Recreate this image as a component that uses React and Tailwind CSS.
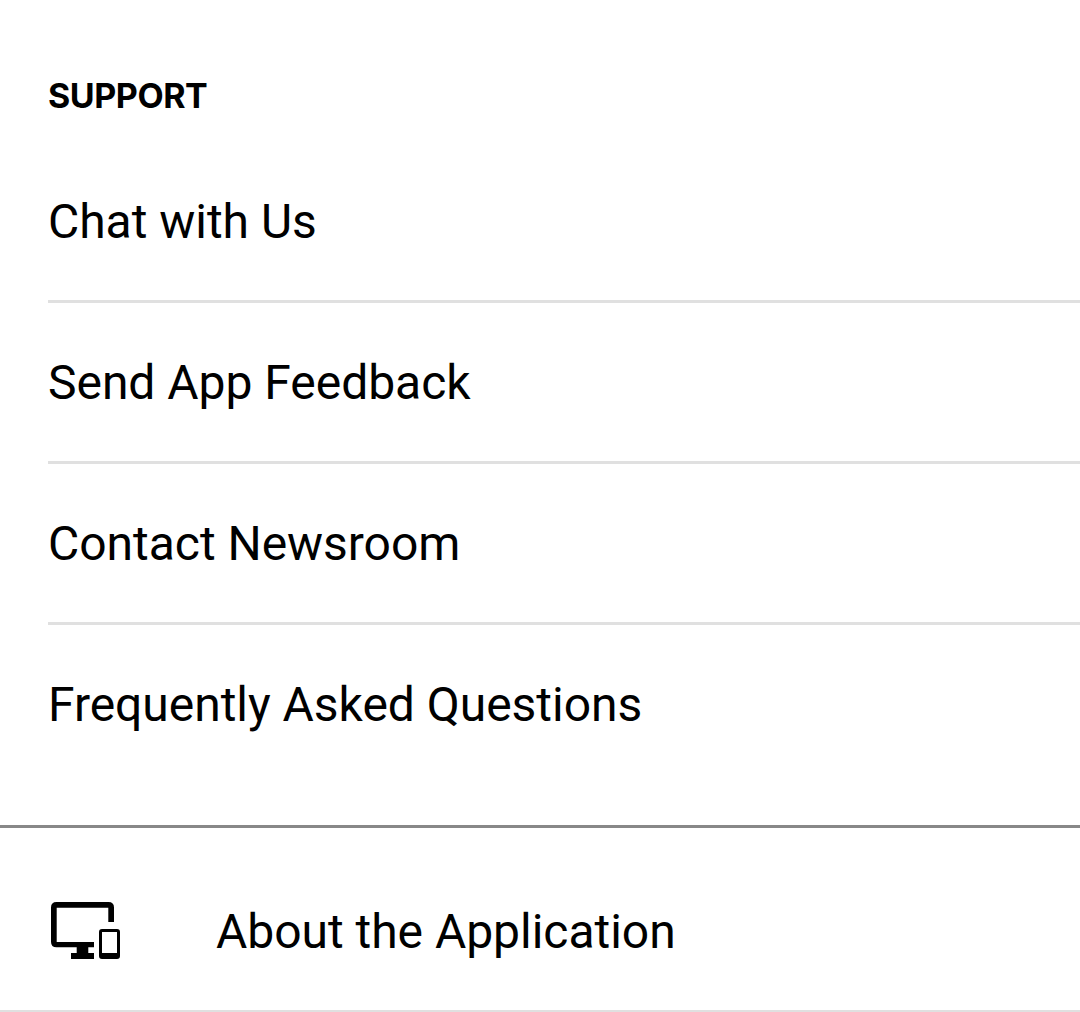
import React from "react";

const links = ["Chat with Us", "Send App Feedback", "Contact Newsroom", "Frequently Asked Questions"];

export default function App() {
  return (
    <main className="flex h-[1012px] w-[1080px] flex-col overflow-hidden bg-white font-['Roboto',sans-serif] text-black">
      <section className="h-[828px] shrink-0 border-b-[3px] border-[#888888] pl-12">
        <h2 className="pt-[76px] font-['Inter',sans-serif] text-[34px] leading-[40px] font-bold tracking-[-0.45px]">SUPPORT</h2>
        <ul className="mt-[26px]">
          {links.map((label) => (
            <li key={label} className="flex h-[161px] items-center border-b-[3px] border-[#e0e0e0] pt-[2px] text-[48px] tracking-[-0.03px] last:border-transparent">
              <a>{label}</a>
            </li>
          ))}
        </ul>
      </section>
      <section className="flex h-[184px] shrink-0 items-center border-b-2 border-[#e0e0e0] pt-[26px] pl-[51px]">
        <svg className="-mt-[3px] h-[57px] w-[69px] shrink-0" viewBox="0 0 69 57" fill="currentColor" fillRule="evenodd">
          <path d="M5.5 0H57.5Q63 0 63 5.5V20H57.3V5.7H5.7V40H43V45.3H37.3V51H43V57H20V51H25.7V45.3H5.5Q0 45.3 0 39.8V5.5Q0 0 5.5 0Z" />
          <path d="M51 27H66Q69 27 69 30V54Q69 57 66 57H51Q48 57 48 54V30Q48 27 51 27ZM51 30V51H66V30Z" />
        </svg>
        <span className="ml-24 text-[48px] tracking-[-0.03px]">About the Application</span>
      </section>
    </main>
  );
}
